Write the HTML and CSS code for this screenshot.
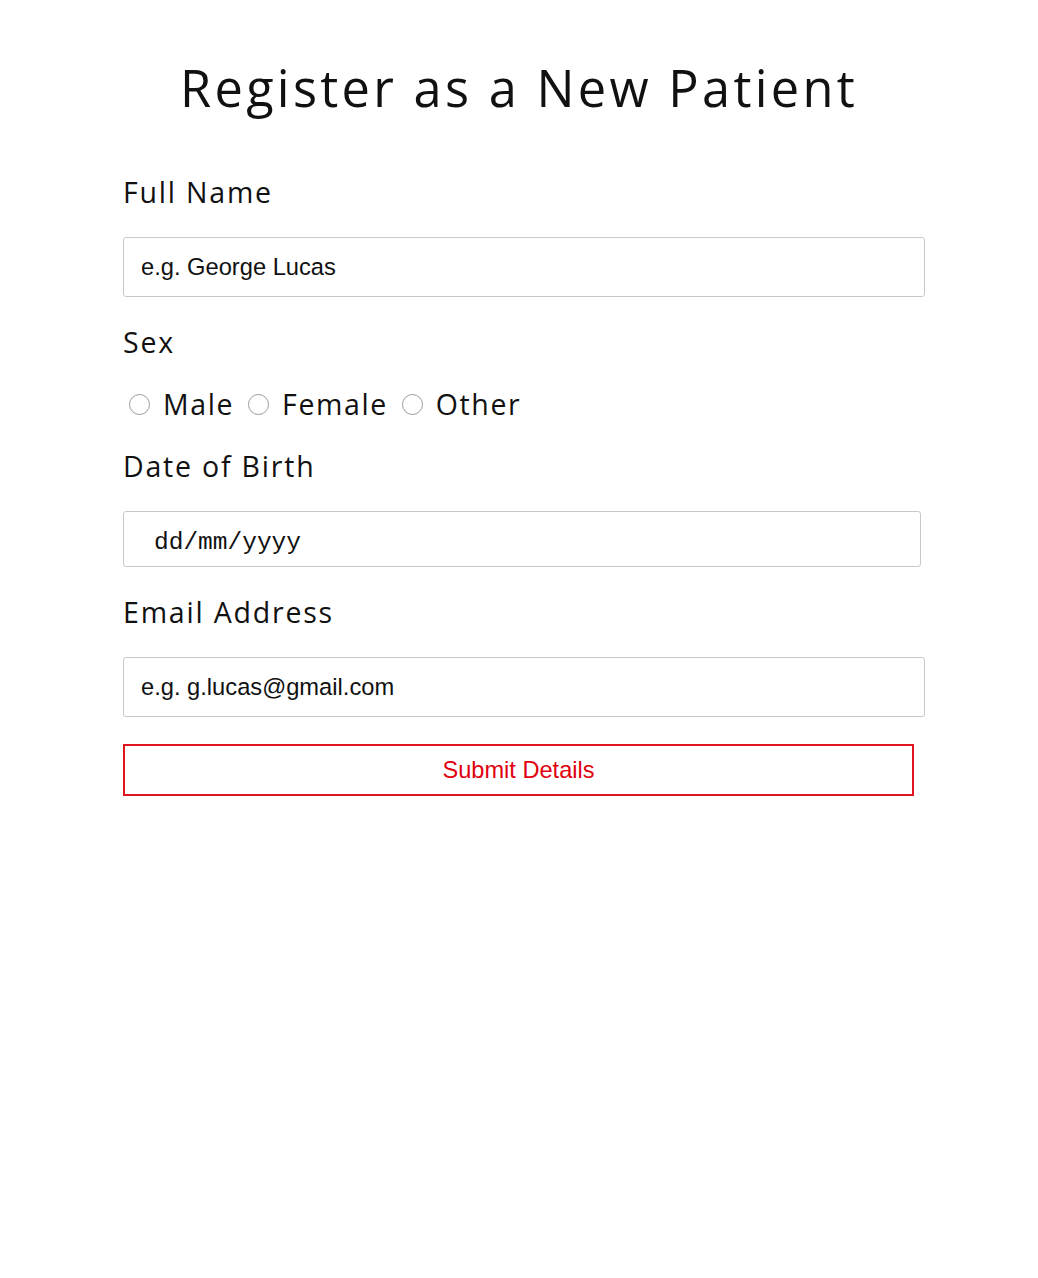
FILE: index.html
```html
<!DOCTYPE html>
<html lang="en">
<head>
<meta charset="utf-8">
<title>Register as a New Patient</title>
<link rel="stylesheet" href="styles.css">
</head>
<body>
<main class="page">
  <h1 class="title">Register as a New Patient</h1>
  <form class="form">
    <label class="label" for="name">Full Name</label>
    <input class="field" id="name" type="text" placeholder="e.g. George Lucas">
    <span class="label">Sex</span>
    <div class="radios">
      <label class="radio"><span class="dot"></span>Male</label>
      <label class="radio"><span class="dot"></span>Female</label>
      <label class="radio"><span class="dot"></span>Other</label>
    </div>
    <label class="label" for="dob">Date of Birth</label>
    <input class="field field-date" id="dob" type="text" placeholder="dd/mm/yyyy">
    <label class="label" for="email">Email Address</label>
    <input class="field" id="email" type="text" placeholder="e.g. g.lucas@gmail.com">
    <button class="submit" type="button">Submit Details</button>
  </form>
</main>
</body>
</html>
```

FILE: styles.css
```css
* { box-sizing: border-box; }
html, body { margin: 0; padding: 0; background: #fff; }
body { font-family: "Open Sans", "DejaVu Sans", sans-serif; color: #111; }

.page { width: 1038px; }

.title {
  margin: 58px 0 0 0;
  font-size: 50.5px;
  line-height: 60px;
  font-weight: 400;
  letter-spacing: 3.3px;
  text-align: center;
  color: #111;
}

.form {
  display: flex;
  flex-direction: column;
  align-items: flex-start;
  gap: 28px;
  margin: 57px 0 0 123px;
}

.label {
  font-size: 28.5px;
  line-height: 34px;
  letter-spacing: 1.8px;
  color: #111;
}

.field {
  width: 802px;
  height: 60px;
  border: 1px solid #c8c8c8;
  border-radius: 3px;
  padding: 0 17px;
  font-family: "Liberation Sans", Arial, sans-serif;
  font-size: 23.7px;
  color: #111;
  background: #fff;
  outline: none;
}
.field::placeholder { color: #111; opacity: 1; }

.field-date {
  width: 798px;
  height: 56px;
  padding: 6px 30px 0 30px;
  font-family: "Liberation Mono", "Courier New", monospace;
  font-size: 24.5px;
}

.radios {
  display: flex;
  align-items: center;
  height: 34px;
  gap: 14px;
  padding-left: 6px;
}
.radio {
  display: flex;
  align-items: center;
  gap: 13px;
  font-size: 28.5px;
  line-height: 34px;
  letter-spacing: 1.6px;
  color: #111;
}
.dot {
  width: 21px;
  height: 21px;
  border: 1px solid #9a9a9a;
  border-radius: 50%;
  background: #fff;
  flex: none;
}

.submit {
  width: 791px;
  height: 52px;
  margin-top: -1px;
  border: 2px solid #e0151d;
  background: #fff;
  color: #e0000e;
  font-family: "Liberation Sans", Arial, sans-serif;
  font-size: 23.6px;
  padding: 0;
}
```
